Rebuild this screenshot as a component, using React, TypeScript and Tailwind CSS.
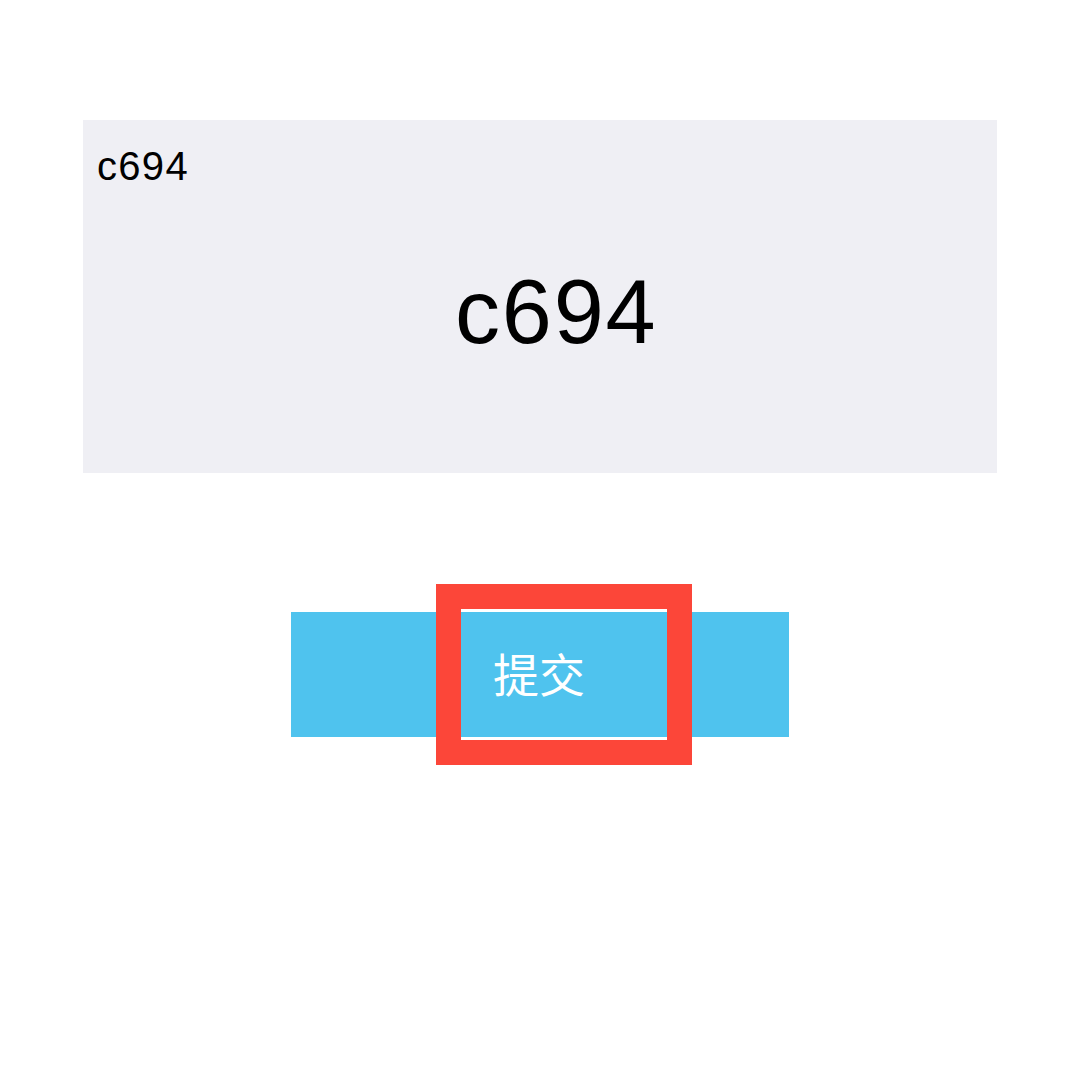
export default function App() {
  return (
    <div className="w-[1080px] h-[1080px] bg-white overflow-hidden pt-[120px]" style={{ fontFamily: '"Liberation Sans", Arial, sans-serif' }}>
      <div className="ml-[83px] w-[914px] h-[353px] bg-[#efeff4] flex flex-col">
        <div className="mt-[26px] ml-[14px] text-[40px] leading-none tracking-[1.3px] text-black">c694</div>
        <div className="mt-[81px] ml-[372px] text-[90px] leading-none tracking-[1.8px] text-black">c694</div>
      </div>
      <div className="mt-[139px] ml-[291px] w-[498px] h-[125px] bg-[#4fc3ee] relative flex items-center justify-center">
        <span className="text-[46px] leading-none text-white -translate-y-[3px] -translate-x-[1px]" style={{ fontFamily: '"Noto Sans CJK SC", sans-serif' }}>提交</span>
        <div className="absolute left-[145px] top-[-28px] w-[256px] h-[181px] border-[25px] border-[#fc4639]" />
      </div>
    </div>
  );
}
